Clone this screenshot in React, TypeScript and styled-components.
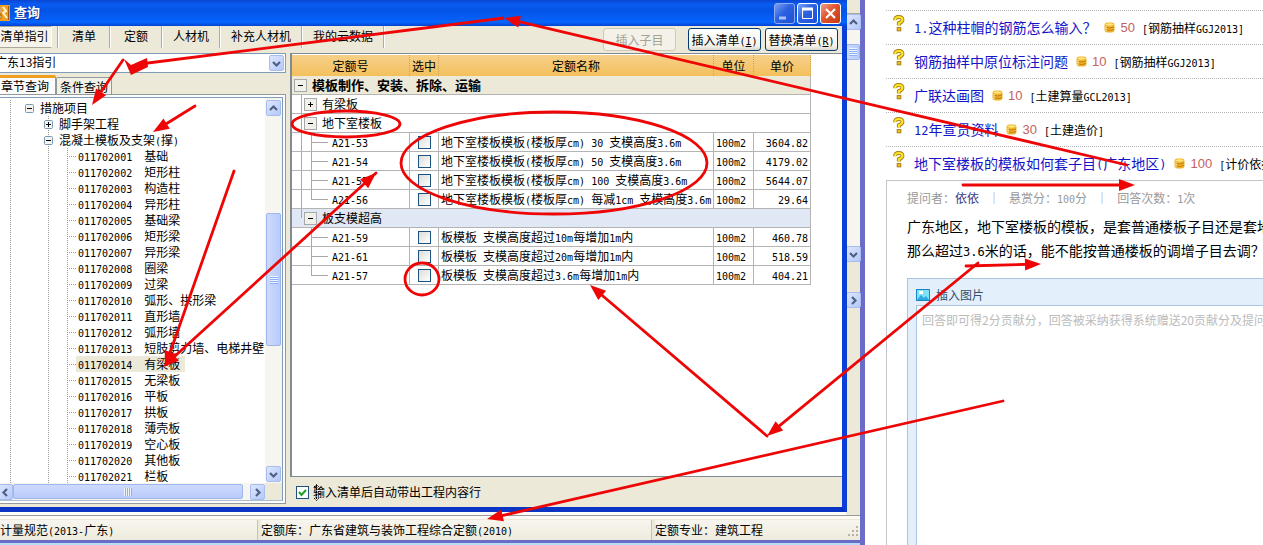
import React from 'react';
import styled, { createGlobalStyle, css } from 'styled-components';

const GlobalStyle = createGlobalStyle`
  *, *::before, *::after { box-sizing: border-box; }
  body {
    margin: 0;
    background: #fff;
    color: #000;
    font: 12px/16px 'Noto Sans CJK SC', sans-serif;
    overflow: hidden;
  }
  button, input, select, textarea { font: inherit; color: inherit; margin: 0; }
`;

/* ---------- text: half-width characters take half of a full-width cell ---------- */

const Half = styled.span<{ $size: number }>`
  font-family: 'DejaVu Sans Mono', monospace;
  font-size: ${p => p.$size}px;
  line-height: 1;
  white-space: pre;
`;

function Mixed({ children, size = 10 }: { children: string; size?: number }) {
  return (
    <>
      {children.split(/([\x20-\x7e]+)/).map((part, i) =>
        i % 2 ? <Half key={i} $size={size}>{part}</Half> : part,
      )}
    </>
  );
}

/* ---------- page ---------- */

const Page = styled.div`
  position: relative;
  display: flex;
  min-height: 100vh;
  overflow: hidden;
`;

const MainWindow = styled.div`
  position: relative;
  flex: 1 1 865px;
  min-width: 0;
  display: flex;
  flex-direction: column;
  background: #ece9d8;
  border-right: 5px solid #6a6cc8;
  white-space: nowrap;
`;

const MainBody = styled.div`
  flex: 1;
  display: flex;
  justify-content: flex-end;
  background: #fdfdfb;
  border-bottom: 1px solid #9a9a94;
`;

const Strip = styled.div`
  width: 14px;
  display: flex;
  flex-direction: column;
  background: #f6f5f0;
`;

const StripTop = styled.div`
  height: 14px;
  background: #ece9d8;
  border-bottom: 1px solid #aca899;
`;

const Space = styled.div<{ $h?: number }>`
  ${p => (p.$h ? `height: ${p.$h}px;` : 'flex: 1;')}
`;

const StatusBar = styled.div`
  display: flex;
  height: 24px;
  padding-top: 1px;
  background: #ece9d8;
  border-top: 3px solid #fbfaf6;
`;

const StatusCell = styled.div<{ $basis: number }>`
  display: flex;
  align-items: center;
  flex: ${p => p.$basis} 1 ${p => p.$basis}px;
  min-width: 0;
  overflow: hidden;
  line-height: 18px;
  border-right: 1px solid #c5c2b2;
  background: linear-gradient(#f7f6ee, #eeebdd);
  & + & { margin-left: 3px; }
  &:last-child { border-right: 0; }
  svg { margin-left: auto; }
`;

const FrameBottom = styled.div`
  height: 5px;
  background: #6a6cc8;
  border-bottom: 2px solid #b9dcf6;
`;

/* ---------- dialog ---------- */

const Dialog = styled.section`
  position: absolute;
  top: 0;
  left: -6px;
  right: 13px;
  bottom: 33px;
  display: flex;
  flex-direction: column;
  background: #ece9d8;
  border: solid #0a3ccf;
  border-width: 0 5px 5px 0;
  border-right-color: #0b3fd6;
  border-bottom-color: #0a35c4;
`;

const TitleBar = styled.header`
  display: flex;
  align-items: center;
  height: 26px;
  gap: 2px;
  margin-right: -5px;
  padding-right: 6px;
  background: linear-gradient(#0846d0 0, #0a5cf0 4px, #0453e6 10px, #0560f8 20px, #0667ff 22px, #0442d0 26px);
`;

const Title = styled.h1`
  flex: 1;
  margin: 0 0 0 2px;
  color: #fff;
  font-size: 13px;
  line-height: 22px;
  padding-bottom: 3px;
  font-weight: 700;
  text-shadow: 1px 1px 0 #06309a;
`;

const CaptionButton = styled.button<{ $kind: 'min' | 'max' | 'close' }>`
  width: 21px;
  height: 21px;
  padding: 0;
  border: 1px solid ${p => (p.$kind === 'min' ? '#8fabf0' : '#fff')};
  border-radius: 3px;
  background: ${p =>
    p.$kind === 'close'
      ? 'linear-gradient(135deg, #f0a088, #e0532c 45%, #c23a10)'
      : 'linear-gradient(135deg, #7ba0f6, #2c62e0 45%, #1c4fd6)'};
  svg { display: block; }
`;

const Toolbar = styled.nav`
  display: flex;
  height: 27px;
  padding-right: 4px;
`;

const Tool = styled.button<{ $active?: boolean }>`
  min-width: 52px;
  height: 22px;
  padding: 0 10px 2px;
  border: 0;
  border-right: 2px groove #fff;
  background: none;
  ${p => p.$active && css`
    width: 58px;
    padding: 0 2px 2px 5px;
    margin-right: 5px;
    border: 1px solid #aca899;
    border-right-color: #fff;
    background: #f5f3ea;
  `}
`;

const ToolSeparator = styled.span`
  height: 22px;
  border-left: 2px groove #fff;
`;

const Actions = styled.div`
  display: flex;
  align-items: center;
  gap: 4px;
  margin-left: auto;
`;

const ActionButton = styled.button`
  width: 73px;
  height: 23px;
  padding: 0;
  border: 1px solid #003c74;
  border-radius: 3px;
  background: linear-gradient(#fff, #f4f2ea 80%, #dcd7cb);
  &:disabled {
    color: #a5a296;
    border-color: #cdcaba;
    background: #f3f1e8;
    margin-right: 8px;
  }
`;

const Content = styled.div`
  flex: 1;
  min-height: 0;
  display: flex;
  gap: 4px;
`;

/* ---------- left pane ---------- */

const LeftPane = styled.div`
  width: 292px;
  flex: none;
  display: flex;
  flex-direction: column;
  padding-bottom: 3px;
`;

const Combo = styled.label`
  display: flex;
  height: 20px;
  padding-right: 1px;
  align-items: center;
  border: 1px solid #7f9db9;
  background: #fff;
`;

const Select = styled.select`
  flex: 1;
  height: 18px;
  padding: 0 0 2px;
  border: 0;
  outline: 0;
  appearance: none;
  background: transparent;
`;

const Tabs = styled.div`
  display: flex;
  align-items: flex-end;
  height: 21px;
`;

const Tab = styled.button<{ $active?: boolean }>`
  height: ${p => (p.$active ? 19 : 17)}px;
  padding: ${p => (p.$active ? '0 6px 2px' : '0 3px')};
  line-height: 15px;
  border: 1px solid #919b9c;
  border-top: ${p => (p.$active ? '3px solid #f0a020' : '1px solid #919b9c')};
  border-bottom: 0;
  border-radius: 2px 2px 0 0;
  background: ${p => (p.$active ? '#fcfcfe' : '#f3f1e7')};
`;

const TreeFrame = styled.div`
  flex: 1;
  min-height: 0;
  padding: 2px;
  border: 1px solid #919b9c;
  background: #fcfcfe;
  display: flex;
`;

const TreeBox = styled.div`
  flex: 1;
  min-width: 0;
  display: grid;
  grid-template-columns: minmax(0, 1fr) 17px;
  grid-template-rows: minmax(0, 1fr) 17px;
  border: 1px solid #7f9db9;
  border-bottom-color: #a9bdd0;
  background: #fff;
`;

const Tree = styled.ul`
  list-style: none;
  margin: 0;
  padding: 2px 0 0 2px;
  overflow: hidden;
`;

const TreeRow = styled.li`
  display: flex;
  height: 16px;
`;

const dots = (dir: string) =>
  `repeating-linear-gradient(${dir}, #9a9a9a 0 1px, transparent 1px 2px)`;

const Guide = styled.span<{ $line?: boolean; $tick?: boolean }>`
  width: 19px;
  flex: none;
  background-repeat: no-repeat;
  background-image: ${p => (p.$line ? dots('to bottom') : 'none')}, ${p => (p.$tick ? dots('to right') : 'none')};
  background-size: 1px 100%, 9px 1px;
  background-position: 10px 0, 10px 8px;
`;

const TreeExpander = styled.span`
  width: 9px;
  height: 9px;
  margin: 4px 0 0 6px;
  display: block;
  svg { display: block; background: #fff; }
`;

const TreeLabel = styled.span<{ $selected?: boolean }>`
  padding: 0 5px 0 2px;
  line-height: 16px;
  background: ${p => (p.$selected ? '#ece9d8' : 'transparent')};
`;

const Code = styled.span`
  margin-right: 12px;
`;

/* ---------- scroll bars ---------- */

const VBar = styled.div`
  display: flex;
  flex-direction: column;
  padding: 2px 1px 1px;
  background: #f6f5f0;
`;

const HBar = styled.div`
  display: flex;
  padding: 1px 0;
  background: #f6f5f0;
`;

const Corner = styled.div`
  background: #ece9d8;
`;

const ScrollButton = styled.button`
  flex: none;
  width: 15px;
  height: 16px;
  padding: 0;
  display: grid;
  place-items: center;
  border: 1px solid #a9bcf0;
  border-radius: 2px;
  background: linear-gradient(135deg, #dde6ff, #b4c8f8);
`;

const Thumb = styled.div<{ $h?: number; $grow?: boolean; $across?: boolean }>`
  ${p => (p.$grow ? 'flex: 1; margin-right: 7px;' : `height: ${p.$h}px;`)}
  display: grid;
  place-items: center;
  border: 1px solid #9fb5ee;
  border-radius: 2px;
  background: linear-gradient(${p => (p.$across ? 'to bottom' : 'to right')}, #cddafd, #b9cbfa);
`;

const Grip = styled.span<{ $across?: boolean }>`
  width: 8px;
  height: 8px;
  background: repeating-linear-gradient(${p => (p.$across ? 'to right' : 'to bottom')}, #eef4fe 0 1px, #8cb0f8 1px 2px);
`;

type Dir = 'up' | 'down' | 'left' | 'right';
const chevrons: Record<Dir, string> = {
  up: 'M1 6 L4.5 2.5 L8 6',
  down: 'M1 3 L4.5 6.5 L8 3',
  left: 'M6 1 L2.5 4.5 L6 8',
  right: 'M3 1 L6.5 4.5 L3 8',
};

function Arrowhead({ dir }: { dir: Dir }) {
  return (
    <svg width="9" height="9" viewBox="0 0 9 9">
      <path d={chevrons[dir]} fill="none" stroke="#4d6185" strokeWidth="2.2" />
    </svg>
  );
}

/* ---------- quota table ---------- */

const RightPane = styled.div`
  flex: 1;
  min-width: 0;
  display: flex;
  flex-direction: column;
`;

const Sheet = styled.div`
  flex: 1;
  padding: 1px 31px 0 0;
  background: #fff;
  border: solid #828a94;
  border-width: 1px 0 1px 2px;
`;

const Table = styled.table`
  width: 100%;
  table-layout: fixed;
  border-collapse: separate;
  border-spacing: 0;
`;

const Th = styled.th<{ $w?: number }>`
  ${p => p.$w && `width: ${p.$w}px;`}
  height: 21px;
  padding: 0;
  line-height: 18px;
  font-weight: 400;
  background: linear-gradient(#f6d08a, #f3c05c);
  border-right: 1px dotted #c9a15a;
`;

const Td = styled.td<{ $align?: string }>`
  height: 19px;
  padding: 0 2px;
  overflow: hidden;
  line-height: 18px;
  text-align: ${p => p.$align ?? 'left'};
  border: solid #b4b4b4;
  border-width: 0 1px 1px 0;
`;

const TreeTd = styled(Td)<{ $tone?: string; $bold?: boolean }>`
  padding: 0;
  background: ${p => p.$tone ?? '#fff'};
  font-weight: ${p => (p.$bold ? 700 : 400)};
  font-size: ${p => (p.$bold ? 13 : 12)}px;
`;

/* A one-line cell body; its height fixes the row height whatever fonts meet in it. */
const CellLine = styled.div`
  display: flex;
  height: 18px;
`;

const CellText = styled.span`
  display: block;
  height: 18px;
  line-height: 18px;
`;

const QuotaCode = styled(CellText)`
  padding-left: 4px;
`;

const Rail = styled.span<{ $w: number; $v?: boolean; $half?: boolean; $h?: boolean }>`
  width: ${p => p.$w}px;
  flex: none;
  background-repeat: no-repeat;
  background-image: ${p => (p.$v || p.$half ? 'linear-gradient(#a8a8a8, #a8a8a8)' : 'none')},
    ${p => (p.$h ? 'linear-gradient(#a8a8a8, #a8a8a8)' : 'none')};
  background-size: 1px ${p => (p.$half ? '9px' : '100%')}, 100% 1px;
  background-position: 9px 0, 9px 9px;
`;

const GridExpander = styled.button`
  width: 13px;
  height: 13px;
  margin: 3px 5px 0 2px;
  padding: 0;
  flex: none;
  border: 1px solid #a8a8a8;
  background: #f1f1ec;
  svg { display: block; }
`;

const Tick = styled.input`
  appearance: none;
  display: block;
  flex: none;
  width: 13px;
  height: 13px;
  border: 1px solid #1c5180;
  background: linear-gradient(135deg, #dcdcd7, #fff);
  &:checked {
    background: #fff url("data:image/svg+xml,%3Csvg xmlns='http://www.w3.org/2000/svg' viewBox='0 0 11 11'%3E%3Cpath d='M2 5l2.5 3L9 3' fill='none' stroke='%2321a121' stroke-width='2'/%3E%3C/svg%3E");
  }
`;

const TickCell = styled(Td)`
  input { margin: 0 0 0 6px; }
`;

const Footer = styled.footer`
  display: flex;
  align-items: center;
  height: 30px;
  padding-left: 6px;
  gap: 4px;
  label { position: relative; }
`;

const Cursor = styled.svg`
  position: absolute;
  left: 0;
  top: 0;
`;

/* ---------- forum ---------- */

const Forum = styled.main`
  flex: 1 1 398px;
  min-width: 0;
  display: flex;
  flex-direction: column;
  padding: 10px 0 0 21px;
  overflow: hidden;
  white-space: nowrap;
`;

const Questions = styled.ul`
  list-style: none;
  margin: 0;
  padding: 0;
`;

const Question = styled.li`
  display: flex;
  align-items: center;
  height: 34px;
  padding-left: 7px;
  border-top: 1px dotted #b4b4b4;
  svg { flex: none; }
`;

const MarkIcon = styled.svg`
  margin: 0 9px 8px 0;
`;

const QuestionLink = styled.a`
  margin-right: 8px;
  padding-bottom: 2px;
  color: #1414c8;
  font-size: 14px;
  line-height: 20px;
  text-decoration: none;
`;

const Points = styled.span`
  margin: 0 7px 0 5px;
  color: #c4615c;
  font: 13px/20px 'Liberation Sans', sans-serif;
`;

const Detail = styled.article`
  flex: 1;
  display: flex;
  flex-direction: column;
  padding: 8px 0 0 20px;
  border: solid #c4c4cc;
  border-width: 1px 0 0 1px;
`;

const Meta = styled.div`
  height: 18px;
  display: flex;
  color: #999;
  line-height: 18px;
  a { color: #333a8c; text-decoration: none; }
`;

const Bar = styled.span`
  width: 30px;
  text-align: center;
`;

const Body = styled.p`
  margin: 7px 0 16px;
  font-size: 14px;
  line-height: 24px;
`;

const Editor = styled.div`
  flex: 1;
  display: flex;
  flex-direction: column;
  padding-left: 8px;
  background: #e3f0fc;
  border: solid #a9c4de;
  border-width: 1px 0 0 1px;
`;

const InsertImage = styled.button`
  display: flex;
  align-items: center;
  gap: 6px;
  height: 26px;
  padding: 6px 0 0;
  border: 0;
  background: none;
  color: #34506c;
`;

const Answer = styled.textarea`
  flex: 1;
  padding: 6px 5px;
  resize: none;
  outline: 0;
  overflow: hidden;
  white-space: nowrap;
  border: solid #a9c4de;
  border-width: 1px 0 0 1px;
  background: #fff;
  &::placeholder { color: #bbb; opacity: 1; }
`;

const Markup = styled.svg`
  position: absolute;
  left: 0;
  top: 0;
  pointer-events: none;
`;

/* ---------- data ---------- */

const leaves = [
  '基础', '矩形柱', '构造柱', '异形柱', '基础梁', '矩形梁', '异形梁', '圈梁', '过梁',
  '弧形、拱形梁', '直形墙', '弧形墙', '短肢剪力墙、电梯井壁', '有梁板', '无梁板', '平板',
  '拱板', '薄壳板', '空心板', '其他板', '栏板',
];

const slabRows = [
  ['A21-53', '地下室楼板模板(楼板厚cm) 30 支模高度3.6m', '3604.82'],
  ['A21-54', '地下室楼板模板(楼板厚cm) 50 支模高度3.6m', '4179.02'],
  ['A21-55', '地下室楼板模板(楼板厚cm) 100 支模高度3.6m', '5644.07'],
  ['A21-56', '地下室楼板模板(楼板厚cm) 每减1cm 支模高度3.6m', '29.64'],
];

const highRows = [
  ['A21-59', '板模板 支模高度超过10m每增加1m内', '460.78'],
  ['A21-61', '板模板 支模高度超过20m每增加1m内', '518.59'],
  ['A21-57', '板模板 支模高度超过3.6m每增加1m内', '404.21'],
];

const questions = [
  { title: '1.这种柱帽的钢筋怎么输入？', points: 50, tag: '[钢筋抽样GGJ2013]' },
  { title: '钢筋抽样中原位标注问题', points: 10, tag: '[钢筋抽样GGJ2013]' },
  { title: '广联达画图', points: 10, tag: '[土建算量GCL2013]' },
  { title: '12年宣贯资料', points: 30, tag: '[土建造价]' },
  { title: '地下室楼板的模板如何套子目(广东地区)', points: 100, tag: '[计价依据]' },
];

/* ---------- parts ---------- */

function BoxSign({ plus, size }: { plus?: boolean; size: number }) {
  const c = size / 2;
  return (
    <svg width={size} height={size} viewBox={`0 0 ${size} ${size}`}>
      {size === 9 && <rect x="0.5" y="0.5" width="8" height="8" rx="1" fill="#f4f3ee" stroke="#7898b5" />}
      <path
        d={`M${c - 2.5} ${c}H${c + 2.5}${plus ? `M${c} ${c - 2.5}V${c + 2.5}` : ''}`}
        stroke="#000"
      />
    </svg>
  );
}

function QuotaRow({ row, more, last }: { row: string[]; more: boolean; last: boolean }) {
  const [code, name, price] = row;
  return (
    <tr>
      <TreeTd>
        <CellLine>
          <Rail $w={10} $v={more} />
          <Rail $w={26} $v={!last} $half={last} $h />
          <QuotaCode><Mixed>{code}</Mixed></QuotaCode>
        </CellLine>
      </TreeTd>
      <TickCell><Tick type="checkbox" aria-label={code} /></TickCell>
      <Td><CellText><Mixed>{name}</Mixed></CellText></Td>
      <Td><CellText><Mixed>100m2</Mixed></CellText></Td>
      <Td $align="right"><CellText><Mixed>{price}</Mixed></CellText></Td>
    </tr>
  );
}

function GroupRow({ label, plus, tone, last }: { label: string; plus?: boolean; tone?: string; last?: boolean }) {
  return (
    <tr>
      <TreeTd colSpan={5} $tone={tone}>
        <CellLine>
          <Rail $w={10} $v={!last} $half={last} />
          <GridExpander aria-label={label}><BoxSign plus={plus} size={11} /></GridExpander>
          {label}
        </CellLine>
      </TreeTd>
    </tr>
  );
}

function Coin() {
  return (
    <svg width="11" height="11" viewBox="0 0 11 11">
      <rect x="0.5" y="0.5" width="10" height="10" rx="3" fill="#f0b428" />
      <path d="M1 2.5Q5.5 0 10 2.5Q5.5 5 1 2.5Z" fill="#ffe680" />
      <path d="M1 5Q5.5 7.2 10 5M1 7.5Q5.5 9.7 10 7.5" fill="none" stroke="#c07a10" />
      <path d="M2 4v5" stroke="#fff2b0" />
    </svg>
  );
}

function QuestionMark() {
  return (
    <MarkIcon width="12" height="17" viewBox="0 0 12 17">
      <path d="M2.2 5.2Q2 2 5.8 2Q9.6 2 9.4 5Q9.2 7 5.9 8.2V10.6" fill="none" stroke="#a87d10" strokeWidth="4" />
      <path d="M2.2 5.2Q2 2 5.8 2Q9.6 2 9.4 5Q9.2 7 5.9 8.2V10.6" fill="none" stroke="#ffe62a" strokeWidth="2.2" />
      <rect x="4.2" y="12.6" width="3.6" height="3.2" fill="#f0c020" stroke="#a87d10" />
    </MarkIcon>
  );
}

const RED = '#ee0606';

function Arrow({ from, to, both }: { from: [number, number]; to: [number, number]; both?: boolean }) {
  const head = (a: [number, number], b: [number, number]) => {
    const len = Math.hypot(b[0] - a[0], b[1] - a[1]);
    const ux = (b[0] - a[0]) / len;
    const uy = (b[1] - a[1]) / len;
    const bx = b[0] - ux * 16;
    const by = b[1] - uy * 16;
    return `${b[0]},${b[1]} ${bx - uy * 6},${by + ux * 6} ${bx + uy * 6},${by - ux * 6}`;
  };
  const len = Math.hypot(to[0] - from[0], to[1] - from[1]);
  const ex = to[0] - ((to[0] - from[0]) / len) * 10;
  const ey = to[1] - ((to[1] - from[1]) / len) * 10;
  return (
    <g>
      <line x1={from[0]} y1={from[1]} x2={ex} y2={ey} strokeLinecap="round" />
      <polygon points={head(from, to)} fill={RED} stroke="none" />
      {both && <polygon points={head(to, from)} fill={RED} stroke="none" />}
    </g>
  );
}

export default function App() {
  return (
    <Page>
      <GlobalStyle />
      <MainWindow>
        <MainBody>
          <Strip>
            <StripTop />
            <ScrollButton aria-label="上"><Arrowhead dir="up" /></ScrollButton>
            <Space $h={14} />
            <Thumb $h={16}><Grip /></Thumb>
            <Space $h={186} />
            <ScrollButton aria-label="下"><Arrowhead dir="down" /></ScrollButton>
            <Corner><Space $h={30} /></Corner>
            <ScrollButton aria-label="右"><Arrowhead dir="right" /></ScrollButton>
            <Corner as={Space} />
          </Strip>
        </MainBody>
        <StatusBar>
          <StatusCell $basis={258}><span><Mixed>计量规范(2013-广东)</Mixed></span></StatusCell>
          <StatusCell $basis={391}><span><Mixed>定额库：广东省建筑与装饰工程综合定额(2010)</Mixed></span></StatusCell>
          <StatusCell $basis={205}>
            定额专业：建筑工程
            <svg width="12" height="18" viewBox="0 0 12 18">
              <path d="M8 6h2M4 10h2M8 10h2M0 14h2M4 14h2M8 14h2" stroke="#b8b4a2" strokeWidth="2" />
            </svg>
          </StatusCell>
        </StatusBar>
        <FrameBottom />

        <Dialog>
          <TitleBar>
            <svg width="16" height="16" viewBox="0 0 16 16">
              <rect width="16" height="16" fill="#f0a020" />
              <path d="M2 3h5v4H3v5h4M9 2l3 4-3 2 4 5" fill="none" stroke="#fff6d0" strokeWidth="2" />
              <path d="M7 2v12M14.5 1v14" stroke="#a85a08" />
            </svg>
            <Title>查询</Title>
            <CaptionButton $kind="min" aria-label="最小化">
              <svg width="19" height="19"><path d="M4 14h7" stroke="#a9c0f5" strokeWidth="3" /></svg>
            </CaptionButton>
            <CaptionButton $kind="max" aria-label="最大化">
              <svg width="19" height="19">
                <path d="M4.5 5v9.5h10V5" fill="none" stroke="#fff" /><path d="M4 5h11" stroke="#fff" strokeWidth="3" />
              </svg>
            </CaptionButton>
            <CaptionButton $kind="close" aria-label="关闭">
              <svg width="19" height="19"><path d="M5 5l9 9M14 5l-9 9" stroke="#fff" strokeWidth="2.2" /></svg>
            </CaptionButton>
          </TitleBar>

          <Toolbar>
            <Tool $active>清单指引</Tool>
            <ToolSeparator />
            <Tool>清单</Tool>
            <Tool>定额</Tool>
            <Tool>人材机</Tool>
            <Tool>补充人材机</Tool>
            <Tool>我的云数据</Tool>
            <Actions>
              <ActionButton disabled>插入子目</ActionButton>
              <ActionButton>插入清单<Half $size={10}>(<u>I</u>)</Half></ActionButton>
              <ActionButton>替换清单<Half $size={10}>(<u>R</u>)</Half></ActionButton>
            </Actions>
          </Toolbar>

          <Content>
            <LeftPane>
              <Combo>
                <Select aria-label="指引"><option>广东13指引</option></Select>
                <ScrollButton as="span"><Arrowhead dir="down" /></ScrollButton>
              </Combo>
              <Tabs>
                <Tab $active>章节查询</Tab>
                <Tab>条件查询</Tab>
              </Tabs>
              <TreeFrame>
                <TreeBox>
                  <Tree>
                    <TreeRow>
                      <Guide $line />
                      <Guide><TreeExpander><BoxSign size={9} /></TreeExpander></Guide>
                      <TreeLabel>措施项目</TreeLabel>
                    </TreeRow>
                    <TreeRow>
                      <Guide $line /><Guide />
                      <Guide $line><TreeExpander><BoxSign size={9} plus /></TreeExpander></Guide>
                      <TreeLabel>脚手架工程</TreeLabel>
                    </TreeRow>
                    <TreeRow>
                      <Guide $line /><Guide />
                      <Guide $line><TreeExpander><BoxSign size={9} /></TreeExpander></Guide>
                      <TreeLabel><Mixed>混凝土模板及支架(撑)</Mixed></TreeLabel>
                    </TreeRow>
                    {leaves.map((name, i) => (
                      <TreeRow key={name}>
                        <Guide $line /><Guide /><Guide $line /><Guide $line $tick />
                        <TreeLabel $selected={name === '有梁板'}>
                          <Code><Mixed>{`0117020${String(i + 1).padStart(2, '0')}`}</Mixed></Code>
                          {name}
                        </TreeLabel>
                      </TreeRow>
                    ))}
                  </Tree>
                  <VBar>
                    <ScrollButton aria-label="向上"><Arrowhead dir="up" /></ScrollButton>
                    <Space $h={97} />
                    <Thumb $h={133}><Grip /></Thumb>
                    <Space />
                    <ScrollButton aria-label="向下"><Arrowhead dir="down" /></ScrollButton>
                  </VBar>
                  <HBar>
                    <ScrollButton aria-label="向左"><Arrowhead dir="left" /></ScrollButton>
                    <Thumb $grow $across><Grip $across /></Thumb>
                    <ScrollButton aria-label="向右"><Arrowhead dir="right" /></ScrollButton>
                  </HBar>
                  <Corner />
                </TreeBox>
              </TreeFrame>
            </LeftPane>

            <RightPane>
              <Sheet>
                <Table>
                  <thead>
                    <tr>
                      <Th $w={118}>定额号</Th>
                      <Th $w={29}>选中</Th>
                      <Th>定额名称</Th>
                      <Th $w={40}>单位</Th>
                      <Th $w={57}>单价</Th>
                    </tr>
                  </thead>
                  <tbody>
                    <tr>
                      <TreeTd colSpan={5} $tone="#ece9d8" $bold>
                        <CellLine>
                          <GridExpander aria-label="模板"><BoxSign size={11} /></GridExpander>
                          模板制作、安装、拆除、运输
                        </CellLine>
                      </TreeTd>
                    </tr>
                    <GroupRow label="有梁板" plus />
                    <GroupRow label="地下室楼板" />
                    {slabRows.map((row, i) => (
                      <QuotaRow key={row[0]} row={row} more last={i === slabRows.length - 1} />
                    ))}
                    <GroupRow label="板支模超高" tone="#e0e8f5" last />
                    {highRows.map((row, i) => (
                      <QuotaRow key={row[0]} row={row} more={false} last={i === highRows.length - 1} />
                    ))}
                  </tbody>
                </Table>
              </Sheet>
              <Footer>
                <Tick type="checkbox" id="auto" defaultChecked />
                <label htmlFor="auto">
                  输入清单后自动带出工程内容行
                  <Cursor width="7" height="17" viewBox="0 0 7 17">
                    <path d="M1 3L3.5 0.5L6 3M1 14L3.5 16.5L6 14M3.5 1v15" fill="none" stroke="#000" strokeDasharray="2 1" />
                  </Cursor>
                </label>
              </Footer>
            </RightPane>
          </Content>
        </Dialog>
      </MainWindow>

      <Forum>
        <Questions>
          {questions.map(q => (
            <Question key={q.title}>
              <QuestionMark />
              <QuestionLink href="#"><Mixed size={12}>{q.title}</Mixed></QuestionLink>
              <Coin />
              <Points>{q.points}</Points>
              <span><Mixed>{q.tag}</Mixed></span>
            </Question>
          ))}
        </Questions>
        <Detail>
          <Meta>
            <span>提问者：</span><a href="#">依依</a>
            <Bar>｜</Bar>
            <span><Mixed>悬赏分：100分</Mixed></span>
            <Bar>｜</Bar>
            <span><Mixed>回答次数：1次</Mixed></span>
          </Meta>
          <Body>
            广东地区，地下室楼板的模板，是套普通楼板子目还是套地下
            <br />
            <Mixed size={12}>那么超过3.6米的话，能不能按普通楼板的调增子目去调？</Mixed>
          </Body>
          <Editor>
            <InsertImage>
              <svg width="14" height="12" viewBox="0 0 14 12">
                <rect x="0.5" y="0.5" width="13" height="11" fill="#7fe0fa" stroke="#1a86c4" />
                <path d="M1 11L5 6L8 9L10 7L13 11Z" fill="#2aa8e0" />
                <rect x="3" y="2" width="4" height="3" fill="#fff" />
              </svg>
              插入图片
            </InsertImage>
            <Answer aria-label="回答" placeholder="回答即可得2分贡献分，回答被采纳获得系统赠送20贡献分及提问者悬赏" />
          </Editor>
        </Detail>
      </Forum>

      <Markup width="1263" height="545" viewBox="0 0 1263 545" fill="none" stroke={RED} strokeWidth="2.8">
        <ellipse cx="346" cy="124" rx="54" ry="13" />
        <ellipse cx="554" cy="163" rx="153" ry="51" />
        <ellipse cx="422" cy="279" rx="17" ry="16" />
        <Arrow from={[1127, 165]} to={[504, 18]} />
        <line x1="504" y1="18" x2="140" y2="64" />
        <polygon points="124,59 131,65 147,58 148,67 131,75" fill={RED} stroke="none" />
        <Arrow from={[123, 60]} to={[92, 105]} />
        <Arrow from={[195, 106]} to={[153, 132]} />
        <Arrow from={[234, 171]} to={[165, 367]} />
        <Arrow from={[376, 173]} to={[163, 367]} both />
        <Arrow from={[767, 436]} to={[590, 285]} />
        <Arrow from={[978, 263]} to={[767, 436]} />
        <Arrow from={[963, 185]} to={[1135, 185]} />
        <Arrow from={[966, 266]} to={[1041, 264]} />
        <Arrow from={[1003, 401]} to={[487, 519]} />
      </Markup>
    </Page>
  );
}
